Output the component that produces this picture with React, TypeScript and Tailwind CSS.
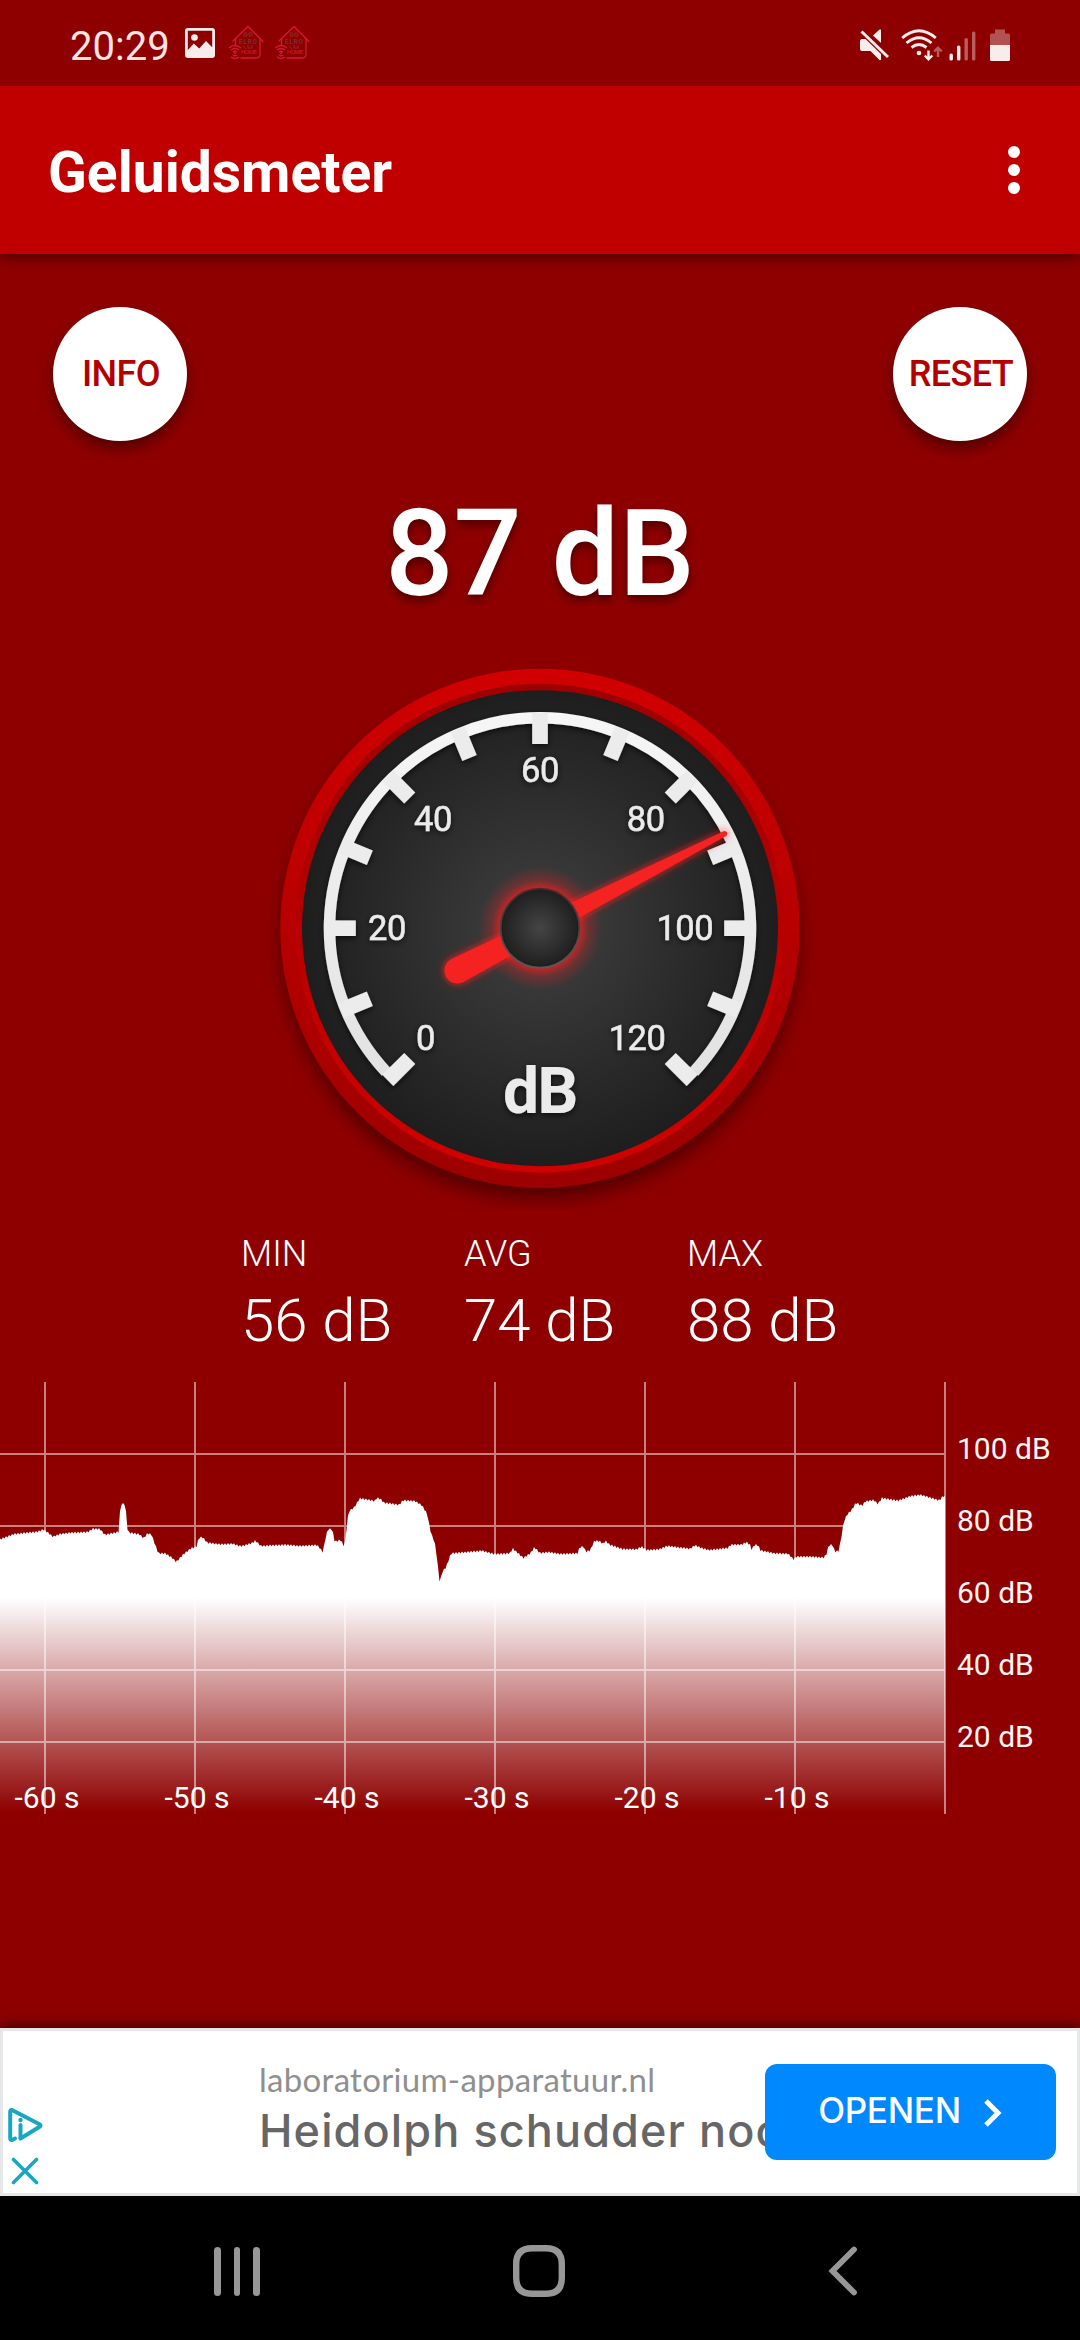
import React from 'react';

interface Stat {
  label: string;
  value: number;
}

type Point = [number, number];

const CHART_WIDTH = 946;
const CHART_HEIGHT = 432;
const PX_PER_DB = 3.6;

const currentDb = 87;
const needleDb = 87.95;

const stats: Stat[] = [
  { label: 'MIN', value: 56 },
  { label: 'AVG', value: 74 },
  { label: 'MAX', value: 88 },
];

// Recorded level over the last minute, in chart pixels
const history: Point[] = [
  [0, 157.3], [7, 154.7], [14, 152], [27.5, 150.7], [38, 149.7], [43, 147.3], [48, 150.7], [53, 154.7],
  [60, 152], [70.6, 150.7], [88, 150], [93, 146.7], [100, 147], [105, 152.7], [113.6, 151], [118.8, 149.7],
  [120.5, 122], [125.3, 122], [127.8, 150.3], [139.5, 152.3], [143.6, 156.3], [147.4, 151.3], [151.5, 152.7],
  [158.4, 171.3], [165.3, 171.3], [172, 175.7], [176.3, 180], [182.5, 173], [191, 166.3], [196.3, 164.7],
  [199, 155.7], [202.5, 155.3], [207.3, 160.7], [220.4, 162.3], [232.4, 161.7], [241, 164.3], [251.4, 161.3],
  [255.5, 158.7], [261, 164], [285.8, 162.7], [299.6, 164], [316.8, 163], [320.2, 166.3], [323, 170.7],
  [324.7, 159.7], [327.8, 147], [332.3, 147.3], [334.7, 159.7], [340.9, 158], [344.4, 165.3], [346.4, 148],
  [348.5, 129.7], [354.7, 124.7], [359.8, 116.3], [374.7, 119], [377, 115.7], [380.5, 117], [384, 120.7],
  [399.4, 122.7], [402.9, 118.3], [415, 119], [421.8, 123.3], [427, 131.3], [431, 151.3], [434.6, 159.7],
  [436.6, 173], [439.7, 200.3], [442.5, 189.7], [446.3, 184.7], [451, 171.3], [464.9, 170.3], [482, 168.7],
  [494, 172], [509.6, 171.3], [513, 166.7], [518.3, 171.3], [523.4, 176], [530.3, 171.3], [534.4, 165.3],
  [540, 171], [548.6, 170], [560.7, 172], [577.9, 171.3], [579.6, 165], [583.7, 164.7], [585.8, 169.7],
  [590.3, 168.3], [594.4, 158.7], [600.3, 159.3], [602.7, 162], [605.4, 158.7], [609.6, 162.7], [622.6, 167],
  [636.4, 167.3], [641.6, 164.7], [646.7, 168], [658.8, 167.3], [667.4, 164], [689.8, 166.7], [695, 163.3],
  [701.8, 166], [708.7, 168], [727.7, 166], [731, 162.7], [741.4, 162.7], [746.6, 160], [750, 163],
  [751.8, 168], [754.2, 163], [758, 163], [760.4, 168.3], [774.2, 171.3], [787.9, 171.7], [793.8, 177.3],
  [796.5, 174.7], [812, 174.7], [824, 175.7], [826.8, 171.3], [828.6, 163], [832.7, 163], [834.8, 169.7],
  [838.9, 168.7], [842, 151.3], [843.7, 139.7], [847, 132.7], [851.6, 128], [856, 120.7], [862, 123.7],
  [865.4, 119.3], [874, 118], [877.8, 122], [882, 116], [898, 118.7], [910, 114.3], [920.5, 112.7],
  [929, 115.3], [939.4, 118.3], [943, 114], [945, 114.7],
];

const levelAt = (x: number): number => {
  for (let i = 1; i < history.length; i++) {
    const [x1, y1] = history[i];
    if (x <= x1) {
      const [x0, y0] = history[i - 1];
      return y0 + ((y1 - y0) * (x - x0)) / (x1 - x0);
    }
  }
  return history[history.length - 1][1];
};

// One sample every 1.5px, with the small ripple of the live signal
const buildArea = (): string => {
  const points: string[] = [];
  for (let i = 0; i * 1.5 <= 945; i++) {
    const x = i * 1.5;
    const ripple = i % 2 === 0 ? -0.9 : 0.9;
    points.push(`${x},${(levelAt(x) + ripple).toFixed(1)}`);
  }
  return `M0,${CHART_HEIGHT} L${points.join(' L')} L945,${CHART_HEIGHT} Z`;
};

const areaPath = buildArea();

const HouseIcon: React.FC = () => (
  <svg width="36" height="36" viewBox="0 0 36 36" fill="none" stroke="#cf1b3a" strokeWidth="1.3">
    <path d="M5 16 L20 1.5 L35 16.5 M32 14 V29 Q32 33 28 33 H13 M7.5 14 V20" strokeLinecap="round" />
    <path d="M16 8h3v3h-3z M21 8h3v3h-3z M15 21l3 3 M20 20v3h4v-3" stroke="#8d2b2b" strokeWidth="1" />
    <text x="11" y="18.5" fontSize="6.5" fontWeight="700" fill="#6b3434" stroke="none" textLength="18" className="font-[Roboto]">ELRO</text>
    <text x="13" y="29" fontSize="6" fill="#cf1b3a" stroke="none" textLength="16" className="font-[Roboto]">HOME</text>
    <path d="M1 23 Q7 18 13 23 M3 25 Q7 22 11 25 M5 27 Q7 25.5 9 27 M5 30 Q7 31.5 9 30 M3 32 Q7 35 11 32" />
    <circle cx="7" cy="28.3" r="1" fill="#cf1b3a" stroke="none" />
  </svg>
);

const StatusBar: React.FC = () => (
  <div className="relative z-20 flex h-[86px] items-center justify-between bg-[#8e0000] px-[70px]">
    <div className="flex items-center pt-1">
      <span className="w-[99px] pt-[3px] text-[40px] leading-[44px] text-[#fbe4e4]">20:29</span>
      <svg className="ml-4 -mt-1" width="30" height="30" viewBox="0 0 30 30">
        <path
          fillRule="evenodd"
          fill="#f8ecec"
          d="M3 0h24a3 3 0 0 1 3 3v24a3 3 0 0 1-3 3H3a3 3 0 0 1-3-3V3a3 3 0 0 1 3-3zM2.8 2.8V22l6-6.5 5.4 5L21 13l6.2 6.2V2.8z"
        />
        <circle cx="9.5" cy="9.5" r="3.3" fill="#f8ecec" />
      </svg>
      <div className="-mt-1 ml-[13px] flex gap-[10px]">
        <HouseIcon />
        <HouseIcon />
      </div>
    </div>
    <div className="flex items-center pt-[3px]">
      <svg width="29" height="32" viewBox="0 0 29 32" fill="#f8ecec">
        <path d="M0 12 Q0 10 2 10 H5.5 L21 25 V31 H19.5 L10.5 22 H2 Q0 22 0 20 Z" />
        <path d="M13 6.5 L19.5 0.5 H21 V14 Z" />
        <path d="M1.5 2.5 L28 28" stroke="#f8ecec" strokeWidth="3" />
        <path d="M4 1.5 L29.5 26" stroke="#8e0000" strokeWidth="1" />
      </svg>
      <svg className="ml-[12px]" width="42" height="32" viewBox="0 0 42 32" fill="none" stroke="#f8ecec" strokeWidth="2.9">
        <path d="M1.2 9 Q18 -5.5 34.8 9 M5.5 14 Q18 3.5 30.5 14 M10.5 18.5 Q18 12.5 25.5 18.5" />
        <circle cx="18" cy="24" r="2.3" fill="#f8ecec" stroke="none" />
        <path d="M27.5 21.5 V30 M23.7 26.5 L27.5 30.3 L31.3 26.5" strokeWidth="2.4" />
        <path d="M37 28 V19.5 M33.2 22.5 L37 18.7 L40.8 22.5" strokeWidth="2.4" opacity="0.4" />
      </svg>
      <svg className="ml-[6px]" width="28" height="32" viewBox="0 0 28 32" fill="#f8ecec">
        <rect x="0.5" y="24.5" width="3.4" height="7" rx="1.5" />
        <rect x="8" y="16.5" width="3.4" height="15" rx="1.5" />
        <rect x="15.5" y="9" width="3.4" height="22.5" rx="1.5" opacity="0.4" />
        <rect x="23" y="2.5" width="3.4" height="29" rx="1.5" opacity="0.4" />
      </svg>
      <svg className="ml-[13px]" width="20" height="32" viewBox="0 0 20 32" fill="#f8ecec">
        <path d="M5 0.5h10v4h3.5a1.5 1.5 0 0 1 1.5 1.5V16H0V6a1.5 1.5 0 0 1 1.5-1.5H5z" opacity="0.35" />
        <path d="M0 16h20v14.5a1.5 1.5 0 0 1-1.5 1.5h-17a1.5 1.5 0 0 1-1.5-1.5z" />
      </svg>
    </div>
  </div>
);

const AppBar: React.FC = () => (
  <header className="relative z-10 flex h-[168px] items-center justify-between bg-[#c00000] pl-12 pr-[60px] shadow-[0_2px_14px_rgba(0,0,0,0.55)]">
    <h1 className="pt-[5px] text-[57px] leading-[64px] font-bold text-white">Geluidsmeter</h1>
    <button className="flex flex-col gap-[6px]" aria-label="Menu">
      <span className="size-3 rounded-full bg-white" />
      <span className="size-3 rounded-full bg-white" />
      <span className="size-3 rounded-full bg-white" />
    </button>
  </header>
);

const RoundButton: React.FC<{ label: string }> = ({ label }) => (
  <button className="flex size-[134px] items-center justify-center rounded-full bg-white pl-[2px] text-[36px] font-medium tracking-[-0.6px] text-[#b20000] shadow-[0_8px_14px_rgba(0,0,0,0.4)]">
    {label}
  </button>
);

const ticks = Array.from({ length: 13 }, (_, i) => -135 + i * 22.5);

const gaugeLabels = [
  { text: '0', x: 425.4, y: 1037.5 },
  { text: '20', x: 387, y: 927.5 },
  { text: '40', x: 433, y: 818.5 },
  { text: '60', x: 540, y: 769.5 },
  { text: '80', x: 645.7, y: 818.5 },
  { text: '100', x: 684.8, y: 927.5 },
  { text: '120', x: 637, y: 1037.5 },
];

const Gauge: React.FC<{ value: number }> = ({ value }) => {
  const angle = -135 + value * 2.25;
  return (
    <svg className="mx-auto mt-[26px]" width="560" height="560" viewBox="260 650 560 560">
      <defs>
        <linearGradient id="rim" x1="0" y1="0" x2="0" y2="1">
          <stop offset="0" stopColor="#d20000" />
          <stop offset="1" stopColor="#9c0000" />
        </linearGradient>
        <linearGradient id="rimInner" x1="0" y1="0" x2="0" y2="1">
          <stop offset="0" stopColor="#9c0000" />
          <stop offset="1" stopColor="#d20000" />
        </linearGradient>
        <radialGradient id="face">
          <stop offset="0" stopColor="#404040" />
          <stop offset="1" stopColor="#1e1e1e" />
        </radialGradient>
        <radialGradient id="hub">
          <stop offset="0" stopColor="#454545" />
          <stop offset="1" stopColor="#1e1e1e" />
        </radialGradient>
        <linearGradient id="hubRim" x1="0" y1="0" x2="0" y2="1">
          <stop offset="0" stopColor="#4a2828" />
          <stop offset="1" stopColor="#5a5a5a" />
        </linearGradient>
        <radialGradient id="glow">
          <stop offset="0.62" stopColor="#ff1c1c" stopOpacity="0.75" />
          <stop offset="0.78" stopColor="#ff1c1c" stopOpacity="0.25" />
          <stop offset="1" stopColor="#ff1c1c" stopOpacity="0" />
        </radialGradient>
        <linearGradient id="scale" gradientUnits="userSpaceOnUse" x1="0" y1="712" x2="0" y2="1115">
          <stop offset="0" stopColor="#f6f6f6" />
          <stop offset="1" stopColor="#e0e0e0" />
        </linearGradient>
        <filter id="drop" x="-20%" y="-20%" width="140%" height="140%">
          <feDropShadow dx="0" dy="12" stdDeviation="9" floodColor="#000" floodOpacity="0.4" />
        </filter>
        <filter id="markShadow" filterUnits="userSpaceOnUse" x="300" y="690" width="480" height="480">
          <feDropShadow dx="0" dy="2" stdDeviation="3" floodColor="#000" floodOpacity="0.7" />
        </filter>
        <filter id="needleGlow" filterUnits="userSpaceOnUse" x="300" y="690" width="480" height="480">
          <feDropShadow dx="0" dy="0" stdDeviation="4" floodColor="#ff1c1c" floodOpacity="0.9" />
        </filter>
      </defs>

      <circle cx="540" cy="928.2" r="259.5" fill="url(#rim)" filter="url(#drop)" />
      <circle cx="540" cy="928.2" r="244.5" fill="url(#rimInner)" />
      <circle cx="540" cy="928.2" r="238" fill="url(#face)" />

      <g filter="url(#markShadow)" stroke="url(#scale)">
        <path d="M386.1 1071.8 A210.5 210.5 0 1 1 693.9 1071.8" fill="none" strokeWidth="11.5" />
        {ticks.map((tick) => (
          <rect
            key={tick}
            x="532.2"
            y="713"
            width="15.6"
            height="31"
            stroke="none"
            fill="#ececec"
            transform={`rotate(${tick} 540 928.2)`}
          />
        ))}
      </g>

      <g filter="url(#markShadow)" fill="#ebebeb" textAnchor="middle" className="font-[Roboto]">
        {gaugeLabels.map((item) => (
          <text key={item.text} x={item.x} y={item.y + 12} fontSize="34.5" fontWeight="400" stroke="#ebebeb" strokeWidth="0.5" letterSpacing="-0.5">
            {item.text}
          </text>
        ))}
        <text x="540" y="1112.5" fontSize="64" fontWeight="700" letterSpacing="-1.5">dB</text>
      </g>

      <circle cx="540" cy="928.2" r="62" fill="url(#glow)" />
      <g filter="url(#needleGlow)">
        <path
          d="M537.4 720 Q540 716 542.6 720 L553 1021 A13 13 0 0 1 527 1021 Z"
          fill="#f52222"
          transform={`rotate(${angle} 540 928.2)`}
        />
      </g>
      <circle cx="540" cy="928.2" r="39.5" fill="url(#hub)" stroke="url(#hubRim)" strokeWidth="1.8" />
    </svg>
  );
};

const StatsRow: React.FC = () => (
  <div className="mt-[22px] flex pl-[241px] font-light text-white">
    {stats.map((stat) => (
      <div key={stat.label} className="w-[223px]">
        <p className="text-[36px] leading-[44px]">{stat.label}</p>
        <p className="mt-[10px] h-[69px] text-[60px] leading-[70px]">{stat.value} dB</p>
      </div>
    ))}
  </div>
);

const HistoryChart: React.FC = () => (
  <div className="mt-[27px] flex">
    <svg width={CHART_WIDTH} height={CHART_HEIGHT} viewBox={`0 0 ${CHART_WIDTH} ${CHART_HEIGHT}`}>
      <defs>
        <linearGradient id="level" gradientUnits="userSpaceOnUse" x1="0" y1="216" x2="0" y2="430">
          <stop offset="0" stopColor="#fff" />
          <stop offset="1" stopColor="#fff" stopOpacity="0" />
        </linearGradient>
      </defs>
      <path d={areaPath} fill="url(#level)" />
      <g fill="#fff" opacity="0.5">
        {[100, 80, 60, 40, 20].map((db) => (
          <rect key={db} x="0" y={CHART_HEIGHT - db * PX_PER_DB - 1} width="944" height="2" />
        ))}
        {[-60, -50, -40, -30, -20, -10, 0].map((s) => (
          <rect key={s} x={944 + s * 15} y="0" width="2" height={CHART_HEIGHT} />
        ))}
      </g>
      <g fill="#fff" fontSize="30" textAnchor="middle" className="font-[Roboto]">
        {[-60, -50, -40, -30, -20, -10].map((s) => (
          <text key={s} x={947 + s * 15} y="426">{s} s</text>
        ))}
      </g>
    </svg>
    <div className="flex flex-col pt-[31px] pl-[11px] text-[30px] leading-[72px] text-[#fff4f4]">
      {[100, 80, 60, 40, 20].map((db) => (
        <span key={db}>{db} dB</span>
      ))}
    </div>
  </div>
);

const AdBanner: React.FC = () => (
  <div className="relative z-10 flex h-[168px] border-[3px] border-[#e6e8e8] bg-white shadow-[0_-2px_14px_rgba(0,0,0,0.6)]">
    <div className="flex w-[256px] flex-col gap-[14px] pt-[76px] pl-[4px]">
      <svg width="36" height="36" viewBox="0 0 36 36" fill="none" stroke="#19a7c0" strokeLinecap="round" strokeLinejoin="round">
        <path d="M13.5 31.5 L33 19.5 Q34 18.5 33 17.5 L5 3 Q3.2 2.5 3.2 5 V31 Q3.2 33.5 5 33 L8 31.5" strokeWidth="4" />
        <path d="M13.5 18 V31" strokeWidth="4" />
        <circle cx="13.5" cy="13" r="2.2" fill="#19a7c0" stroke="none" />
      </svg>
      <svg className="ml-[4px]" width="28" height="28" viewBox="0 0 28 28" stroke="#19a7c0" strokeWidth="3.6" strokeLinecap="round">
        <path d="M2.5 2.5 L25.5 25.5 M25.5 2.5 L2.5 25.5" />
      </svg>
    </div>
    <div className="w-[506px] whitespace-nowrap pt-[28px]">
      <p className="text-[33px] leading-[40px] tracking-[0.3px] text-[#8f8f8f] font-[Lato,sans-serif]">laboratorium-apparatuur.nl</p>
      <p className="mt-[5px] text-[45px] leading-[54px] font-medium tracking-[1.1px] text-[#666] font-[Inter,sans-serif]">Heidolph schudder noc</p>
    </div>
    <button className="relative mt-[33px] flex h-24 w-[291px] items-center justify-center rounded-xl bg-[#0088ff] pb-[3px] text-white">
      <span className="text-[35px] font-medium tracking-[-0.3px] font-[Inter,sans-serif]">OPENEN</span>
      <svg className="ml-[22px] mt-[5px]" width="20" height="30" viewBox="0 0 20 30" fill="none" stroke="#fff" strokeWidth="5">
        <path d="M3 3 L15 15 L3 27" />
      </svg>
    </button>
  </div>
);

const NavBar: React.FC = () => (
  <nav className="flex h-36 items-center justify-between bg-black pt-[6px] pr-[222px] pl-[214px]">
    <div className="flex gap-[13px]">
      <span className="h-[49px] w-[6.6px] rounded-full bg-[#979797]" />
      <span className="h-[49px] w-[6.6px] rounded-full bg-[#979797]" />
      <span className="h-[49px] w-[6.6px] rounded-full bg-[#979797]" />
    </div>
    <svg className="mr-[9px]" width="52" height="52" viewBox="0 0 52 52" fill="none" stroke="#979797" strokeWidth="6.4">
      <path d="M19 3.2 H33 Q48.8 3.2 48.8 19 V33 Q48.8 48.8 33 48.8 H19 Q3.2 48.8 3.2 33 V19 Q3.2 3.2 19 3.2 Z" />
    </svg>
    <svg width="31" height="50" viewBox="0 0 31 50" fill="none" stroke="#979797" strokeWidth="5.8" strokeLinecap="round">
      <path d="M27 3.5 L5.5 25 L27 46.5" />
    </svg>
  </nav>
);

const App: React.FC = () => (
  <div className="flex h-[2340px] w-[1080px] flex-col overflow-hidden bg-[#8e0000] font-[Roboto,sans-serif]">
    <StatusBar />
    <AppBar />
    <main className="flex-1">
      <div className="flex justify-between px-[53px] pt-[53px]">
        <RoundButton label="INFO" />
        <RoundButton label="RESET" />
      </div>
      <p className="mt-[43px] text-center text-[120px] leading-[140px] font-medium text-white [text-shadow:0_5px_10px_rgba(0,0,0,0.45)]">
        {currentDb} dB
      </p>
      <Gauge value={needleDb} />
      <StatsRow />
      <HistoryChart />
    </main>
    <AdBanner />
    <NavBar />
  </div>
);

export default App;
